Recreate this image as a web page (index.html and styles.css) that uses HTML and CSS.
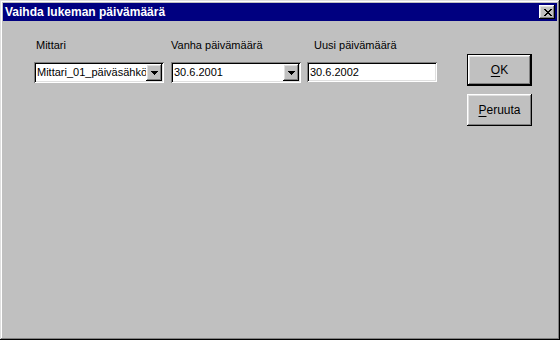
FILE: index.html
```html
<!DOCTYPE html>
<html lang="fi">
<head>
<meta charset="utf-8">
<title>Vaihda lukeman päivämäärä</title>
<link rel="stylesheet" href="styles.css">
</head>
<body>
<div class="window">
  <div class="titlebar">
    <span class="title">Vaihda lukeman päivämäärä</span>
    <div class="close">
      <svg width="8" height="7" viewBox="0 0 8 7" shape-rendering="crispEdges">
        <path d="M0 0h2v1h-2zM6 0h2v1h-2zM1 1h2v1h-2zM5 1h2v1h-2zM2 2h4v1h-4zM3 3h2v1h-2zM2 4h4v1h-4zM1 5h2v1h-2zM5 5h2v1h-2zM0 6h2v1h-2zM6 6h2v1h-2z" fill="#000"/>
      </svg>
    </div>
  </div>
  <div class="body">
    <div class="fields">
      <div class="field">
        <div class="label l1">Mittari</div>
        <div class="combo sunken">
          <span class="value">Mittari_01_päiväsähkö</span>
          <div class="drop raised"><svg width="7" height="4" viewBox="0 0 7 4" shape-rendering="crispEdges"><path d="M0 0h7v1h-7zM1 1h5v1h-5zM2 2h3v1h-3zM3 3h1v1h-1z" fill="#000"/></svg></div>
        </div>
      </div>
      <div class="field f2">
        <div class="label l2">Vanha päivämäärä</div>
        <div class="combo sunken">
          <span class="value">30.6.2001</span>
          <div class="drop raised"><svg width="7" height="4" viewBox="0 0 7 4" shape-rendering="crispEdges"><path d="M0 0h7v1h-7zM1 1h5v1h-5zM2 2h3v1h-3zM3 3h1v1h-1z" fill="#000"/></svg></div>
        </div>
      </div>
      <div class="field f3">
        <div class="label l3">Uusi päivämäärä</div>
        <div class="textbox sunken"><span class="value">30.6.2002</span></div>
      </div>
    </div>
    <div class="buttons">
      <div class="btn default"><div class="btn-inner raised"><span><u>O</u>K</span></div></div>
      <div class="btn raised"><span><u>P</u>eruuta</span></div>
    </div>
  </div>
</div>
</body>
</html>
```
FILE: styles.css
```css
html, body {
  margin: 0;
  padding: 0;
  background: #c0c0c0;
}
.window {
  width: 560px;
  height: 340px;
  box-sizing: border-box;
  padding: 3px;
  background: #c0c0c0;
  box-shadow: inset -1px -1px #000, inset 1px 1px #dfdfdf, inset -2px -2px #808080, inset 2px 2px #fff;
  display: flex;
  flex-direction: column;
  font-family: "Liberation Sans", Arial, sans-serif;
  font-size: 11px;
  color: #000;
}
.titlebar {
  height: 18px;
  background: #000080;
  display: flex;
  align-items: center;
  justify-content: space-between;
  padding-left: 2px;
  padding-right: 2px;
}
.title {
  color: #fff;
  font-weight: bold;
  font-size: 12px;
  line-height: 18px;
}
.close {
  width: 16px;
  height: 14px;
  box-sizing: border-box;
  background: #c0c0c0;
  box-shadow: inset -1px -1px #000, inset 1px 1px #fff, inset -2px -2px #808080, inset 2px 2px #dfdfdf;
  display: flex;
  align-items: center;
  justify-content: center;
  padding-left: 1px;
}
.close svg { display: block; }
.body {
  flex: 1;
  display: flex;
  padding: 18px 0 0 31px;
}
.fields {
  display: flex;
}
.field {
  display: flex;
  flex-direction: column;
}
.f2 { margin-left: 7px; }
.f3 { margin-left: 6px; }
.label {
  line-height: 13px;
  height: 13px;
  margin-bottom: 10px;
  white-space: nowrap;
}
.l1 { padding-left: 2px; }
.l3 { padding-left: 7px; }
.sunken {
  box-shadow: inset 1px 1px #808080, inset -1px -1px #fff, inset 2px 2px #000, inset -2px -2px #dfdfdf;
  background: #fff;
  box-sizing: border-box;
  padding: 2px;
}
.raised {
  background: #c0c0c0;
  box-shadow: inset -1px -1px #000, inset 1px 1px #fff, inset -2px -2px #808080, inset 2px 2px #dfdfdf;
  box-sizing: border-box;
}
.combo {
  width: 130px;
  height: 21px;
  display: flex;
  align-items: stretch;
}
.textbox {
  width: 130px;
  height: 20px;
  display: flex;
  align-items: center;
}
.value {
  flex: 1;
  overflow: hidden;
  white-space: nowrap;
  padding-left: 1px;
  line-height: 17px;
  font-size: 11px;
}
.textbox .value { line-height: 16px; }
.drop {
  width: 16px;
  flex: none;
  display: flex;
  align-items: center;
  justify-content: center;
  padding-top: 1px;
}
.drop svg { display: block; }
.buttons {
  margin-left: 30px;
  margin-top: 15px;
  display: flex;
  flex-direction: column;
  gap: 8px;
}
.btn {
  width: 65px;
  height: 32px;
  box-sizing: border-box;
  display: flex;
  align-items: center;
  justify-content: center;
  font-size: 12px;
}
.btn.default {
  border: 1px solid #000;
}
.btn-inner {
  width: 100%;
  height: 100%;
  display: flex;
  align-items: center;
  justify-content: center;
}
.btn u { text-decoration: underline; text-underline-offset: 2px; }
```
